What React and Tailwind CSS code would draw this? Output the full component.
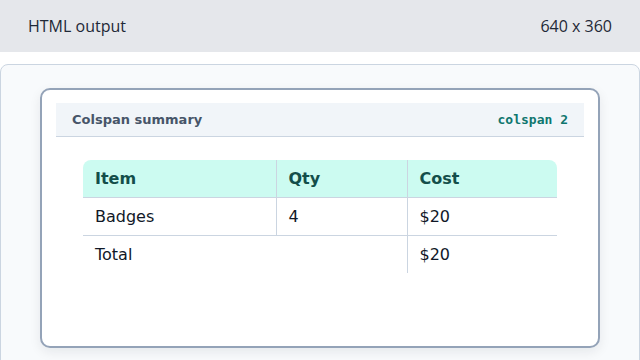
export default function App() {
  return (
    <div className="w-[640px] h-[360px] overflow-hidden bg-white font-['DejaVu_Sans',sans-serif]">
      <div className="h-[52px] bg-[#e5e7eb] px-[28px] flex items-center justify-between font-['Open_Sans',sans-serif] text-[16px] text-[#1f2937]">
        <span>HTML output</span>
        <span>640 x 360</span>
      </div>

      <div className="mt-[12px] h-[320px] border border-[#cbd5e1] rounded-[8px] bg-[#f8fafc] pt-[23px] px-[39px]">
        <div className="h-[260px] border-2 border-[#94a3b8] rounded-[10px] bg-white shadow-[0_4px_12px_rgba(15,23,42,0.08)] px-[14px] pt-[13px]">
          <div className="h-[34px] bg-[#f1f5f9] border-b border-[#cbd5e1] px-[16px] flex items-center justify-between">
            <span className="text-[13px] font-bold text-[#475569]">Colspan summary</span>
            <span className="font-['DejaVu_Sans_Mono',monospace] text-[13px] font-bold text-[#0f766e]">colspan 2</span>
          </div>

          <div className="px-[27px] pt-[23px]">
            <table className="w-full border-collapse text-[16px] text-[#111827]">
              <thead>
                <tr className="bg-[#ccfbf1] text-[#134e4a] h-[37px]">
                  <th className="text-left font-bold px-[12px] pt-[2px] w-[193px] border-b border-r border-[#cbd5e1] rounded-tl-[8px]">Item</th>
                  <th className="text-left font-bold px-[12px] pt-[2px] w-[131px] border-b border-r border-[#cbd5e1]">Qty</th>
                  <th className="text-left font-bold px-[12px] pt-[2px] border-b border-[#cbd5e1] rounded-tr-[8px]">Cost</th>
                </tr>
              </thead>
              <tbody>
                <tr className="h-[38px]">
                  <td className="px-[12px] pt-[2px] border-b border-r border-[#cbd5e1]">Badges</td>
                  <td className="px-[12px] pt-[2px] border-b border-r border-[#cbd5e1]">4</td>
                  <td className="px-[12px] pt-[2px] border-b border-[#cbd5e1]">$20</td>
                </tr>
                <tr className="h-[38px]">
                  <td colSpan={2} className="px-[12px] pt-[2px] border-r border-[#cbd5e1]">Total</td>
                  <td className="px-[12px] pt-[2px]">$20</td>
                </tr>
              </tbody>
            </table>
          </div>
        </div>
      </div>
    </div>
  );
}
